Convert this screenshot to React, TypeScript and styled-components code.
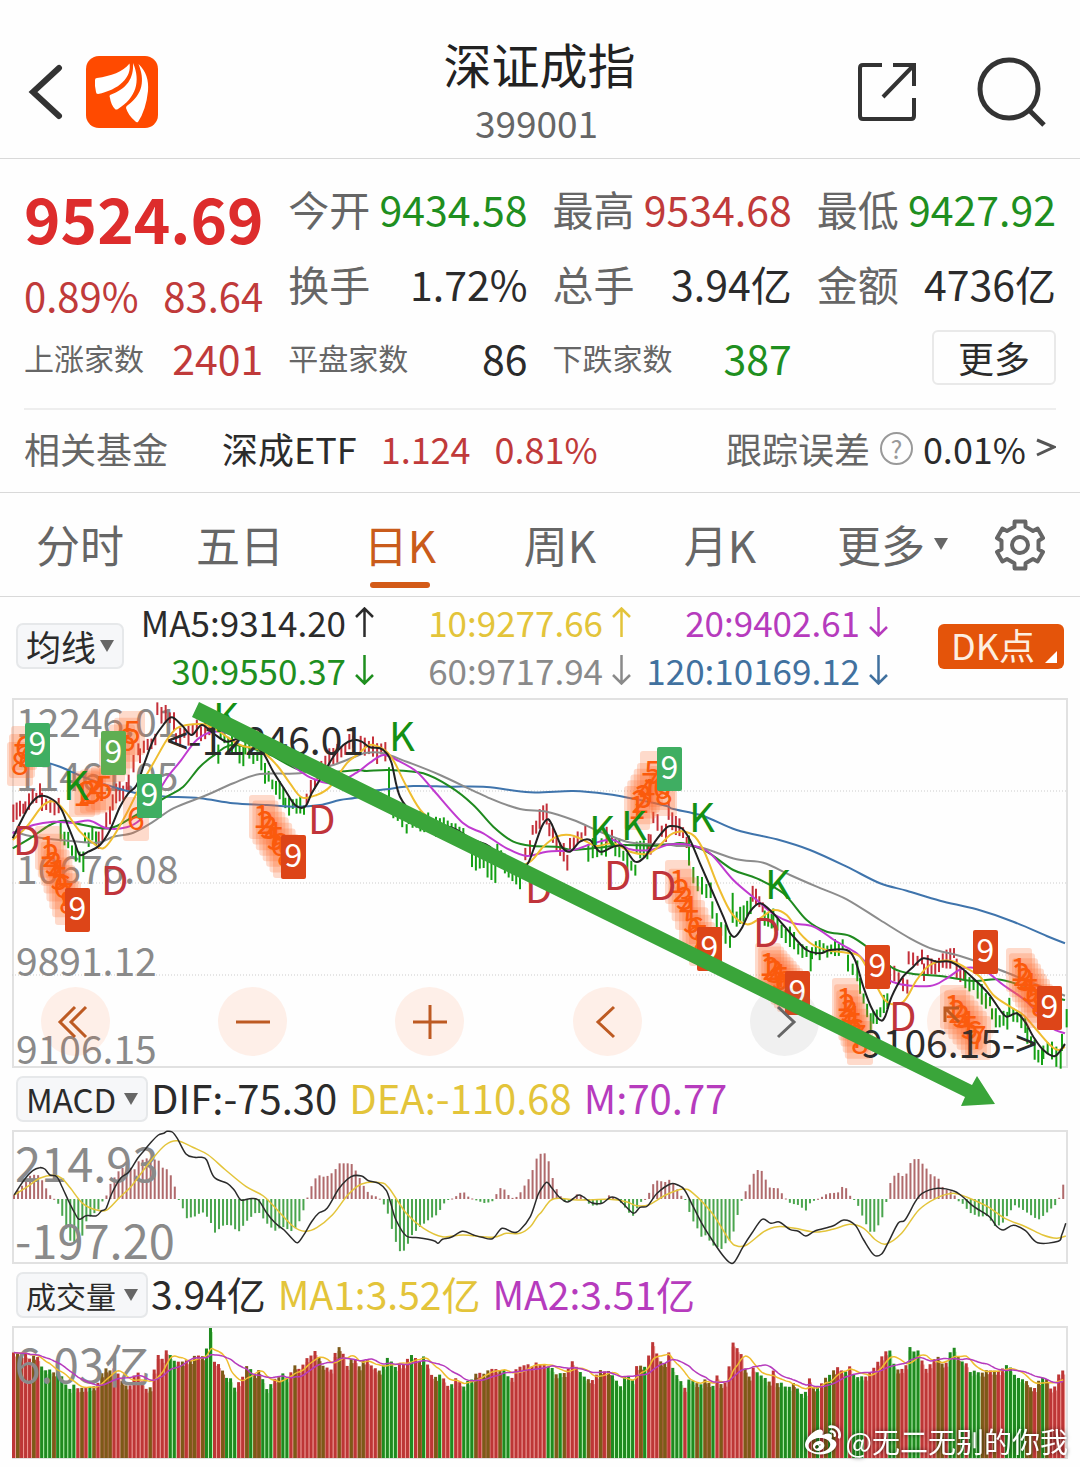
import React from "react";
import styled, { createGlobalStyle } from "styled-components";
import { FaWeibo } from "react-icons/fa";

const C = {
  red: "#c03a3a",
  green: "#1f8f1f",
  ink: "#2b2b2b",
  label: "#666666",
  axis: "#8a8a8a",
  yellow: "#e3c43a",
  magenta: "#b63bbd",
  blue: "#41719f",
  line: "#d9d9d9",
};

const GlobalStyle = createGlobalStyle`
  * { box-sizing: border-box; }
  body {
    margin: 0;
    background: #fefefe;
    color: ${C.ink};
    font-family: "Noto Sans CJK SC", "Noto Sans", sans-serif;
  }
  button, select {
    font: inherit;
    color: inherit;
    background: none;
    border: 0;
    padding: 0;
    margin: 0;
    cursor: pointer;
  }
  svg { display: block; }
`;

/* ---------- series helpers ---------- */

type Pt = [number, number];
const parse = (s: string): Pt[] =>
  s.trim().split(/\s+/).map((p) => p.split(",").map(Number) as Pt);

/* price series are sampled in blocks at 3 units per pixel */
const price = (ox: number, s: string): Pt[] =>
  parse(s).map(([x, y]) => [ox + x / 3, 690 + y / 3]);
/* indicator series are sampled in two halves */
const half = (ox: number, s: string): Pt[] =>
  parse(s).map(([x, y]) => [ox + x / 2.904, 1070 + y / 3]);

const smooth = (pts: Pt[]) => {
  let d = `M${pts[0][0].toFixed(1)} ${pts[0][1].toFixed(1)}`;
  for (let i = 0; i < pts.length - 1; i++) {
    const a = pts[Math.max(i - 1, 0)];
    const b = pts[i];
    const c = pts[i + 1];
    const e = pts[Math.min(i + 2, pts.length - 1)];
    d += `C${(b[0] + (c[0] - a[0]) / 6).toFixed(1)} ${(b[1] + (c[1] - a[1]) / 6).toFixed(1)} ${(c[0] - (e[0] - b[0]) / 6).toFixed(1)} ${(c[1] - (e[1] - b[1]) / 6).toFixed(1)} ${c[0].toFixed(1)} ${c[1].toFixed(1)}`;
  }
  return d;
};

const sample = (pts: Pt[], x: number) => {
  if (x <= pts[0][0]) return pts[0][1];
  for (let i = 1; i < pts.length; i++) {
    if (x <= pts[i][0]) {
      const [x0, y0] = pts[i - 1];
      const [x1, y1] = pts[i];
      return y0 + ((y1 - y0) * (x - x0)) / (x1 - x0 || 1);
    }
  }
  return pts[pts.length - 1][1];
};

const noise = (i: number) => {
  const v = Math.sin(i * 127.1 + 11.7) * 43758.5453;
  return v - Math.floor(v);
};

/* ---------- price chart data ---------- */

const averages: { color: string; d: string }[] = [
  {
    color: "#3f74ac",
    d: smooth([
      ...price(0, "130,215 180,230 260,265 370,300 440,315 500,320 600,325 700,340 800,345 890,350 960,345 1020,330 1075,322"),
      ...price(340, "90,305 140,298 220,288 330,290 440,291 570,307 700,303 800,312 900,330 980,348"),
      ...price(640, "100,357 190,378 290,420 410,448 510,480 620,530 720,580 800,602 900,632 1010,658 1120,695 1220,738 1275,760"),
    ]),
  },
  {
    color: "#8c8c8c",
    d: smooth([
      ...price(0, "38,425 100,440 180,450 290,458 340,440 400,428 460,395 520,355 620,315 700,280 780,252 900,250 1000,225 1070,198"),
      ...price(340, "80,188 130,190 200,215 300,255 450,325 540,357 620,365 700,390 780,425 860,455 920,462 980,463"),
      ...price(640, "110,468 180,472 290,508 370,518 450,555 530,590 620,628 720,690 810,745 880,778 960,798 1080,840 1180,880 1275,917"),
    ]),
  },
  {
    color: "#1f8a1f",
    d: smooth([
      ...price(0, "38,475 90,445 150,405 190,392 250,405 330,415 400,380 440,355 500,320 550,290 600,230 650,190 700,165 800,190 900,240 1000,245 1075,240"),
      ...price(340, "80,243 150,240 250,250 330,290 400,345 460,410 520,455 580,468 650,470 700,480 800,470 850,465 950,467 1000,462"),
      ...price(640, "130,460 200,485 280,540 350,565 430,610 500,690 560,725 630,738 700,785 760,835 820,852 900,858 1000,873 1070,868 1140,885 1200,910 1275,930"),
    ]),
  },
  {
    color: "#c03ad0",
    d: smooth([
      ...price(0, "38,430 100,405 160,395 220,398 270,392 320,415 380,412 420,390 450,350 500,265 540,215 590,150 640,125 700,135 780,175 860,215 930,262 1000,280 1070,248"),
      ...price(340, "90,218 130,195 170,210 230,245 280,300 370,400 430,430 500,475 560,498 620,485 700,480 760,460 820,450 870,478 930,480 980,465"),
      ...price(640, "110,462 150,465 210,490 280,570 350,630 400,672 460,700 520,710 590,755 650,790 700,840 770,880 870,888 920,865 970,835 1030,840 1090,885 1160,935 1230,1010 1275,1030"),
    ]),
  },
  {
    color: "#efbd2f",
    d: smooth([
      ...price(0, "38,450 80,410 130,345 165,335 200,370 240,425 280,460 310,475 340,440 380,370 420,290 460,220 500,150 530,115 560,105 610,103 650,120 720,165 780,180 830,225 870,280 905,322 950,315 990,290 1040,220 1075,192"),
      ...price(340, "80,170 100,165 140,185 165,220 200,290 250,370 330,420 420,465 520,525 570,515 610,470 650,440 690,435 730,450 770,468 820,460 870,485 920,492 950,475 990,435"),
      ...price(640, "115,425 135,425 165,440 195,490 235,590 275,670 320,703 360,685 400,660 440,675 480,730 520,765 570,782 620,788 660,800 700,870 740,935 790,935 830,870 870,825 930,812 980,835 1020,860 1060,915 1110,950 1150,975 1190,1020 1230,1065 1255,1080 1275,1070"),
    ]),
  },
  {
    color: "#222222",
    d: smooth([
      ...price(0, "38,445 60,400 90,345 120,318 160,330 185,360 205,410 225,460 240,495 265,485 300,465 330,420 360,350 385,310 410,285 435,215 460,150 490,105 515,82 545,105 575,135 605,105 640,130 680,155 720,145 760,165 790,190 820,245 855,300 885,345 915,350 935,310 965,260 1000,200 1030,165 1060,150"),
      ...price(340, "65,155 90,172 120,175 140,190 155,220 180,320 230,380 280,400 340,415 400,450 450,470 520,545 560,525 580,480 605,410 625,388 645,425 665,470 690,485 720,455 750,450 780,485 820,470 850,470 885,515 915,500 945,455 975,418"),
      ...price(640, "90,408 125,415 150,450 180,520 215,600 250,680 270,730 285,740 305,715 330,665 360,640 395,665 430,705 465,745 500,780 540,790 570,780 620,780 645,810 670,890 695,955 720,990 735,980 755,920 785,865 820,830 850,805 890,815 930,815 965,835 1000,865 1045,910 1080,960 1100,980 1130,970 1155,995 1180,1040 1210,1080 1245,1098 1275,1062"),
    ]),
  },
];

/* [origin, rising?, x from, x to, y from, y to] */
type Run = [number, 0 | 1, number, number, number, number];
const runs: Run[] = [
  [0, 1, 40, 70, 365, 365], [0, 1, 76, 120, 345, 310], [0, 1, 126, 176, 345, 355],
  [0, 0, 182, 250, 430, 515], [0, 0, 255, 288, 440, 440], [0, 1, 296, 330, 460, 370],
  [0, 1, 338, 380, 330, 290], [0, 1, 386, 415, 280, 170], [0, 1, 420, 466, 190, 140],
  [0, 1, 472, 522, 55, 105], [0, 1, 528, 628, 140, 115], [0, 0, 640, 655, 180, 190],
  [0, 0, 662, 730, 140, 200], [0, 0, 736, 784, 175, 215], [0, 0, 795, 850, 255, 320],
  [0, 0, 856, 912, 340, 355], [0, 1, 920, 945, 320, 290], [0, 1, 952, 1060, 250, 145],
  [340, 1, 62, 136, 175, 185], [340, 0, 147, 148, 270, 270], [340, 0, 160, 200, 360, 410],
  [340, 0, 206, 370, 385, 430], [340, 0, 396, 466, 500, 545], [340, 0, 472, 540, 480, 575],
  [340, 1, 556, 570, 500, 475], [340, 1, 578, 620, 420, 365], [340, 1, 628, 682, 410, 510],
  [340, 1, 690, 736, 470, 430], [340, 0, 745, 798, 485, 470], [340, 1, 800, 816, 440, 450],
  [340, 0, 826, 886, 470, 540], [340, 0, 890, 922, 475, 475], [340, 1, 926, 932, 465, 460],
  [340, 1, 940, 978, 385, 430], [340, 1, 986, 1040, 370, 450],
  [640, 0, 147, 148, 490, 490], [640, 0, 160, 212, 560, 610], [640, 0, 217, 270, 670, 750],
  [640, 0, 278, 279, 650, 650], [640, 0, 290, 332, 690, 640], [640, 1, 338, 368, 610, 650],
  [640, 0, 374, 395, 680, 700], [640, 0, 400, 512, 690, 805], [640, 0, 516, 608, 785, 770],
  [640, 0, 624, 652, 810, 850], [640, 0, 660, 692, 890, 1000], [640, 0, 700, 742, 990, 930],
  [640, 1, 750, 802, 850, 890], [640, 1, 806, 846, 800, 810], [640, 1, 852, 942, 840, 795],
  [640, 1, 950, 972, 840, 850], [640, 0, 976, 1050, 860, 935], [640, 0, 1056, 1102, 975, 995],
  [640, 0, 1108, 1156, 955, 1000], [640, 0, 1162, 1206, 1040, 1105], [640, 0, 1210, 1262, 1080, 1100],
  [640, 0, 1266, 1280, 1050, 990],
];

const candles = runs.flatMap(([ox, up, x0, x1, y0, y1], r) => {
  const n = Math.max(1, Math.round((x1 - x0) / 12) + 1);
  return Array.from({ length: n }, (_, i) => {
    const t = n > 1 ? i / (n - 1) : 0;
    const seed = r * 17 + i;
    const h = n === 1 ? 30 : 9 + noise(seed) * 12;
    const cy = 690 + (y0 + (y1 - y0) * t) / 3 + (noise(seed + 500) - 0.5) * 7;
    return { x: ox + (x0 + (x1 - x0) * t) / 3, y: cy - h / 2, h, up: up === 1 };
  });
});

/* nine-turn counts that lead up to a badge: [digits, x from, y from, x to, y to] */
type Count = [string, number, number, number, number];
const counts: Count[] = [
  ["678", 24, 748, 20, 764],
  ["56784", 132, 733, 112, 760],
  ["12345", 82, 795, 104, 788],
  ["6", 136, 819, 136, 819],
  ["12345678", 48, 848, 68, 903],
  ["12345678", 262, 817, 286, 856],
  ["12347", 637, 808, 650, 785],
  ["5", 653, 773, 653, 773],
  ["68", 662, 788, 664, 794],
  ["1234", 678, 882, 688, 908],
  ["5678", 692, 922, 702, 944],
  ["12345678", 768, 965, 790, 990],
  ["12345678", 845, 1000, 860, 1043],
  ["1234567", 953, 1007, 978, 1038],
  ["12345678", 1019, 970, 1040, 1006],
];
const marks = counts.flatMap(([digits, x0, y0, x1, y1]) =>
  digits.split("").map((digit, i) => {
    const t = digits.length > 1 ? i / (digits.length - 1) : 0;
    return { digit, x: x0 + (x1 - x0) * t, y: y0 + (y1 - y0) * t };
  })
);

const badges: { x: number; y: number; fill: string }[] = [
  { x: 25, y: 723, fill: "#3fae62" },
  { x: 101, y: 731, fill: "#5fae52" },
  { x: 137, y: 774, fill: "#3fae62" },
  { x: 65, y: 888, fill: "#dd4518" },
  { x: 281, y: 835, fill: "#dd4518" },
  { x: 657, y: 747, fill: "#3fae62" },
  { x: 697, y: 927, fill: "#dd4518" },
  { x: 785, y: 971, fill: "#dd4518" },
  { x: 865, y: 945, fill: "#dd4518" },
  { x: 973, y: 930, fill: "#dd4518" },
  { x: 1037, y: 986, fill: "#dd4518" },
];

const signals: [string, number, number][] = [
  ["K", 63, 800], ["K", 213, 732], ["K", 389, 751], ["K", 589, 845], ["K", 621, 840],
  ["K", 689, 832], ["K", 765, 899], ["D", 13, 855], ["D", 101, 895], ["D", 308, 834],
  ["D", 525, 903], ["D", 604, 890], ["D", 649, 900], ["D", 753, 947], ["D", 889, 1031],
];

/* ---------- indicator data ---------- */

const STEP = 4.02;
const COUNT = 262;
const ZERO = 1199;

const histogram = [
  ...half(0, "41,375 62,350 85,318 108,312 122,330 134,355 145,375 157,386 168,398 180,435 192,475 205,515 228,520 240,495 250,455 262,440 285,420 297,395 308,380 320,343 343,305 366,285 390,300 400,275 425,265 460,270 470,292 490,300 505,340 517,385 530,412 541,445 565,440 587,425 610,450 622,490 650,465 670,465 692,487 715,455 740,430 750,425 775,460 798,483 820,470 850,485 865,465 877,435 888,398 900,360 912,330 925,315 945,322 970,305 985,280 1020,280 1035,305 1060,355 1075,375 1100,381 1110,398 1122,412 1133,460 1145,500 1157,540 1167,548 1180,535 1192,500 1215,475 1250,445 1272,433 1285,405 1300,390 1315,385 1330,375 1343,362 1360,380 1385,392 1410,400 1435,392 1445,362 1458,350 1470,365 1483,385 1503,380 1516,360 1528,338 1540,320 1550,290 1562,255"),
  ...half(540, "5,250 18,250 30,290 41,345 53,365 65,388 77,400 90,390 110,370 120,378 133,390 145,405 160,408 180,400 200,376 215,382 230,392 245,410 260,430 274,440 285,405 297,392 310,384 320,362 332,335 345,330 360,338 378,328 390,345 400,360 412,380 423,390 435,430 447,458 460,480 470,503 482,495 500,525 527,537 540,518 552,510 564,480 576,425 588,384 598,362 610,342 621,310 632,300 645,303 656,330 668,354 690,354 704,372 715,387 727,400 750,405 772,422 785,398 800,390 820,380 835,370 865,368 878,350 890,355 901,378 912,388 923,405 935,435 947,462 960,487 972,485 983,465 995,440 1006,395 1016,342 1028,318 1040,308 1055,320 1065,310 1075,280 1088,267 1100,267 1110,280 1122,295 1133,312 1157,325 1168,350 1180,358 1200,368 1212,392 1225,398 1248,428 1275,440 1300,438 1320,468 1340,465 1355,440 1378,405 1400,418 1425,435 1447,450 1470,430 1490,410 1503,400 1515,358 1527,320"),
];

const dif = smooth([
  ...half(0, "41,375 70,330 95,302 115,293 130,297 145,315 165,320 180,350 200,395 215,425 230,448 250,437 280,437 295,422 308,415 325,370 350,325 375,305 400,265 420,240 440,215 460,195 475,190 485,184 500,186 515,205 540,252 565,262 585,262 600,270 622,322 660,340 680,360 700,390 725,386 750,390 775,430 800,460 825,480 850,508 865,518 885,490 905,455 925,430 950,415 985,355 1020,320 1050,318 1070,332 1100,340 1122,362 1135,400 1150,450 1180,498 1215,503 1260,512 1272,520 1285,508 1310,502 1343,484 1375,495 1400,502 1430,506 1458,475 1490,487 1510,480 1540,440 1562,375"),
  ...half(540, "5,355 20,337 35,355 55,380 80,396 110,376 125,380 150,398 180,400 205,382 225,386 245,405 272,430 290,412 312,408 340,370 378,342 400,345 420,360 445,410 470,460 500,510 530,555 550,577 565,575 590,530 615,490 645,448 670,460 695,456 725,478 750,484 772,498 800,482 850,468 882,450 915,465 940,510 970,555 992,552 1010,520 1040,460 1060,450 1090,395 1110,370 1155,355 1200,362 1225,378 1260,410 1305,440 1325,468 1345,480 1375,466 1410,482 1445,518 1505,514 1515,495 1527,460"),
]);

const dea = smooth([
  ...half(0, "41,375 80,350 115,325 155,316 180,325 205,355 240,400 280,420 310,420 345,385 380,350 410,310 440,270 480,225 515,212 560,232 605,255 655,300 715,350 765,378 810,425 850,468 885,484 920,473 965,435 1010,375 1050,342 1105,338 1130,355 1180,430 1230,475 1285,500 1345,495 1430,502 1470,490 1510,490 1540,470 1560,440"),
  ...half(540, "5,425 30,392 55,385 110,390 200,388 250,395 280,407 315,405 365,375 415,357 445,370 500,430 550,510 572,528 600,525 650,485 690,470 740,475 800,486 850,478 900,463 940,475 975,510 1005,522 1050,490 1100,420 1150,385 1200,370 1240,382 1300,410 1350,445 1410,470 1460,495 1500,505 1527,498"),
]);

const volumeTops = [
  ...half(0, "41,845 62,850 85,860 110,860 122,885 140,900 175,905 200,955 215,940 230,960 255,950 280,955 300,900 325,895 343,905 360,945 380,940 400,905 425,955 445,945 455,845 470,875 482,838 492,850 505,875 525,875 550,875 572,858 597,865 608,772 618,870 640,880 655,925 667,918 680,955 700,935 712,895 725,885 740,915 760,900 770,960 782,955 800,930 820,910 832,935 850,900 862,880 873,905 885,875 910,850 922,842 932,875 960,905 977,840 990,835 1010,885 1028,855 1045,890 1063,860 1085,890 1105,900 1130,855 1145,885 1170,885 1200,855 1215,880 1236,852 1250,905 1270,925 1285,915 1304,955 1320,925 1350,945 1375,920 1400,910 1435,890 1455,905 1470,895 1480,940 1500,900 1530,885 1562,882"),
  ...half(540, "5,885 30,885 50,920 65,905 75,915 97,875 115,910 135,920 155,935 180,895 200,905 225,930 237,950 250,915 270,930 284,878 300,900 318,855 330,815 342,855 360,890 377,845 387,895 410,930 423,950 435,925 455,945 490,930 503,955 516,912 528,945 545,925 562,818 575,830 587,855 600,905 610,925 622,890 640,915 665,935 680,905 692,940 720,945 740,945 760,970 775,970 783,922 800,955 820,935 845,915 862,895 885,905 898,890 912,910 945,925 965,900 980,875 1000,852 1016,842 1030,880 1045,900 1062,895 1073,828 1085,855 1097,830 1110,870 1120,905 1135,880 1155,850 1175,890 1190,860 1201,820 1213,860 1235,875 1250,900 1280,915 1300,895 1335,910 1352,880 1367,888 1378,920 1410,930 1435,955 1455,930 1468,908 1478,960 1500,945 1515,895 1527,905"),
];
const volumeKinds =
  "RBRRRBRGGGBGGGGGRBRGBRBBBRRBBRRRRRBRRRRGGRBRBBRBGGRRBGGGRRBGBBGGGRBGGRBRRRRRBBRRRBRRBRBBRRRBGGGGRRRGRBGRRBGRRGRRGGGBRBBRRBGGRRRRRRR" +
  "RRGGBGBRRRGGBRRBRBGGGGGGRBGRRRBBRGGGRGGBGBBGRBRRRRRBBRGGGBRBGGGBGGGRBGRBGBRRGRGGGRRRRRRGGBRRGGGRRRRBBRGGBGRGGGBBRBRRGGGGGBBRBGBRRRR";
const volumeFill: Record<string, string> = { R: "#bd3636", B: "#7c5a18", G: "#1f8a1f" };
const volumeEdge: Record<string, string> = { R: "#ee9a94", B: "#a8603a", G: "#b9f3b2" };

const volumes = Array.from({ length: COUNT }, (_, i) => {
  const x = 14 + i * STEP;
  const spike = Math.abs(x - 209.4) < STEP / 2;
  return {
    x,
    y: spike ? 1328 : Math.max(1340, sample(volumeTops, x) + (noise(i) - 0.5) * 4),
    kind: spike ? "G" : volumeKinds[i] ?? "R",
  };
});
const movingAverage = (n: number): Pt[] =>
  volumes.map((v, i) => {
    const from = Math.max(0, i - n + 1);
    const part = volumes.slice(from, i + 1);
    return [v.x, part.reduce((s, p) => s + p.y, 0) / part.length];
  });

/* ---------- layout ---------- */

const Page = styled.main`
  width: 100%;
  overflow: hidden;
`;

const Header = styled.header`
  display: grid;
  grid-template-columns: 1fr auto 1fr;
  align-items: center;
  padding: 36px 33px 10px 28px;
  border-bottom: 1px solid ${C.line};
`;
const HeaderSide = styled.div<{ $end?: boolean }>`
  display: flex;
  align-items: center;
  justify-content: ${(p) => (p.$end ? "flex-end" : "flex-start")};
  gap: ${(p) => (p.$end ? 60 : 22)}px;
`;
const Heading = styled.div`
  padding-left: 4px;
  text-align: center;
`;
const Title = styled.h1`
  margin: 0 0 6px;
  font-size: 48px;
  line-height: 54px;
  font-weight: 400;
  color: #222;
`;
const Code = styled.p`
  margin: 0;
  padding-right: 6px;
  font-size: 37px;
  line-height: 52px;
  color: ${C.label};
`;

const Quote = styled.section`
  margin: 0 24px;
  padding: 12px 0 14px;
  display: grid;
  grid-template-columns: repeat(4, minmax(0, 1fr));
  grid-template-rows: 74px 75px 74px;
  column-gap: 25px;
  border-bottom: 2px solid #eeeeee;
`;
const Headline = styled.div`
  grid-row: span 2;
`;
const Price = styled.div`
  margin-bottom: 6px;
  font-size: 62px;
  line-height: 92px;
  font-weight: 700;
  color: #dd2c2c;
`;
const Change = styled.div`
  display: flex;
  justify-content: space-between;
  font-size: 40px;
  line-height: 52px;
  color: ${C.red};
`;
const Stat = styled.div`
  display: flex;
  align-items: center;
  justify-content: space-between;
  white-space: nowrap;
`;
const StatLabel = styled.span<{ $small?: boolean }>`
  font-size: ${(p) => (p.$small ? 30 : 41)}px;
  color: ${C.label};
`;
const StatValue = styled.span<{ $color?: string }>`
  font-size: 41px;
  color: ${(p) => p.$color ?? C.ink};
`;
const MoreCell = styled.div`
  display: flex;
  align-items: center;
  justify-content: flex-end;
`;
const MoreButton = styled.button`
  width: 124px;
  height: 55px;
  border: 2px solid #e9e9e9;
  border-radius: 6px;
  font-size: 36px;
  line-height: 46px;
`;

const Fund = styled.section`
  display: flex;
  align-items: center;
  padding: 0 24px 6px;
  height: 83px;
  font-size: 36px;
  white-space: nowrap;
  border-bottom: 1px solid ${C.line};
`;
const FundLabel = styled.span`
  color: ${C.label};
`;
const FundLink = styled.a`
  display: flex;
  gap: 24px;
  margin-left: 54px;
  color: ${C.ink};
  text-decoration: none;
`;
const Rise = styled.span`
  color: ${C.red};
`;
const Tracking = styled.div`
  margin-left: auto;
  display: flex;
  align-items: center;
  gap: 10px;
`;
const Help = styled.button`
  width: 33px;
  height: 33px;
  border: 2px solid #999;
  border-radius: 50%;
  color: #999;
  font-size: 25px;
  line-height: 28px;
`;

const Tabs = styled.nav`
  display: grid;
  grid-template-columns: repeat(6, 160fr) 120fr;
  height: 104px;
  border-bottom: 1px solid ${C.line};
`;
const Tab = styled.button<{ $active?: boolean }>`
  display: flex;
  flex-direction: column;
  align-items: center;
  justify-content: flex-end;
  gap: 6px;
  padding-bottom: 8px;
  font-size: 44px;
  line-height: 64px;
  color: ${(p) => (p.$active ? "#c95b1b" : C.label)};
  &::after {
    content: "";
    width: 60px;
    height: 6px;
    border-radius: 3px;
    background: ${(p) => (p.$active ? "#d35a17" : "transparent")};
  }
`;
const TabText = styled.span`
  display: flex;
  align-items: center;
  gap: 8px;
`;
const MoreTab = styled(Tab)`
  padding-left: 26px;
`;
const GearButton = styled.button`
  display: flex;
  align-items: center;
  justify-content: center;
`;

const Averages = styled.section`
  display: flex;
  align-items: center;
  padding: 1px 16px 4px;
`;
const AverageGrid = styled.div`
  flex: 1;
  display: grid;
  grid-template-columns: 250fr 257fr 257fr;
  padding-right: 50px;
  font-size: 35px;
  line-height: 48px;
  white-space: nowrap;
`;
const Average = styled.span<{ $color: string }>`
  display: flex;
  align-items: center;
  justify-content: flex-end;
  gap: 9px;
  color: ${(p) => p.$color};
`;
const DkButton = styled.button`
  display: flex;
  align-items: flex-end;
  gap: 10px;
  width: 126px;
  height: 45px;
  padding: 0 6px 6px 13px;
  border-radius: 6px;
  background: #e4540a;
  color: #fdeee0;
  font-size: 36px;
  line-height: 38px;
  white-space: nowrap;
`;

const Picker = styled.label<{ $width: number }>`
  position: relative;
  flex: none;
  display: block;
  width: ${(p) => p.$width}px;
  height: 46px;
`;
const PickerSelect = styled.select<{ $size: number }>`
  appearance: none;
  display: block;
  width: 100%;
  height: 100%;
  padding-left: 8px;
  border: 2px solid #e6e8ea;
  border-radius: 7px;
  background: #f6f7f9;
  font-size: ${(p) => p.$size}px;
  line-height: 40px;
`;
const PickerMark = styled.span`
  position: absolute;
  right: 9px;
  top: 16px;
  pointer-events: none;
`;

const ChartArea = styled.section`
  position: relative;
  margin: 0 12px;
`;
const Chart = styled.svg`
  width: 100%;
  height: auto;
  overflow: visible;
`;
const ArrowLayer = styled.svg`
  position: absolute;
  inset: 0;
  z-index: 2;
  width: 100%;
  height: 100%;
  overflow: visible;
  pointer-events: none;
`;
const Controls = styled.div`
  position: absolute;
  z-index: 1;
  left: 29px;
  right: 72px;
  bottom: 12px;
  display: flex;
  justify-content: space-between;
`;
const Control = styled.button<{ $muted?: boolean }>`
  width: 69px;
  height: 69px;
  display: flex;
  align-items: center;
  justify-content: center;
  border-radius: 50%;
  color: ${(p) => (p.$muted ? "#666" : "#bd5a22")};
  background: ${(p) => (p.$muted ? "rgba(120,120,120,0.1)" : "rgba(255,110,40,0.1)")};
`;

const Indicator = styled.div<{ $size: number }>`
  display: flex;
  align-items: center;
  height: 62px;
  padding-left: 16px;
  font-size: ${(p) => p.$size}px;
  white-space: nowrap;
`;
const Readings = styled.div`
  display: flex;
  gap: 12px;
  padding: 0 0 5px 3px;
`;
const Reading = styled.span<{ $color?: string }>`
  color: ${(p) => p.$color ?? C.ink};
`;
const Watermark = styled.div`
  position: absolute;
  right: 0;
  bottom: 0;
  display: flex;
  align-items: center;
  gap: 5px;
  font-size: 28px;
  line-height: 36px;
  color: #fff;
  white-space: nowrap;
  filter: drop-shadow(0 0 2px rgba(0, 0, 0, 0.6));
`;
const Bottom = styled.div`
  height: 8px;
`;

/* ---------- drawings ---------- */

const Triangle = () => (
  <svg width="16" height="14" viewBox="0 0 16 14" aria-hidden="true">
    <path d="M1 1h14L8 13z" fill="#666" />
  </svg>
);

const Trend = ({ down }: { down?: boolean }) => (
  <svg width="19" height="30" viewBox="0 0 19 30" fill="none" stroke="currentColor" strokeWidth="2.5" aria-hidden="true">
    <path d={down ? "M9.500 0v28M1 20l8.500 8.500 8.500-8.500" : "M9.500 30V2M1 10l8.500-8.500 8.500 8.500"} />
  </svg>
);

const gearPoints = Array.from({ length: 6 }, (_, k) => k * 60 - 90)
  .flatMap((a) => [
    [a - 17, 19], [a - 13, 24], [a + 13, 24], [a + 17, 19],
  ])
  .map(([a, r]) => {
    const t = (a * Math.PI) / 180;
    return `${(28 + r * Math.cos(t)).toFixed(1)},${(28 + r * Math.sin(t)).toFixed(1)}`;
  })
  .join(" ");

const Gear = () => (
  <svg width="56" height="56" viewBox="0 0 56 56" fill="none" stroke="#666" strokeWidth="4" aria-hidden="true">
    <polygon points={gearPoints} strokeLinejoin="round" />
    <circle cx="28" cy="28" r="8" />
  </svg>
);

const Logo = () => (
  <svg width="74" height="74" viewBox="0 0 74 74" aria-hidden="true">
    <rect x="1" y="1" width="72" height="72" rx="13" fill="#ff4a00" />
    <g fill="#fff">
      <path d="M10 25Q10 23 12 23C26 21 38 17 44.500 8.500C47 22 34 35 13 39Q11 39 11 37Q9.500 31 10 25z" />
      <path d="M48 8C49 23 42 34 25 40Q24 41 25 43Q26 50 30 54Q31 55 33 54C51 43 56 26 48 8z" />
      <path d="M53.500 9C61 16 64 25 63 36Q61 55 53 67Q51.500 68 50 66Q43 60 41 53Q41 51 43 50C58 39 60 25 53.500 9z" />
    </g>
  </svg>
);

const PriceChart = () => (
  <Chart viewBox="12 698 1056 370" role="img" aria-label="日K线图">
    <rect x="13" y="699" width="1054" height="368" fill="none" stroke="#e1e1e1" strokeWidth="2" />
    {[791, 883, 975].map((y) => (
      <line key={y} x1="12" x2="1068" y1={y} y2={y} stroke="#cccccc" strokeDasharray="1 2" />
    ))}
    <g fill={C.axis} fontSize="39">
      <text x="16" y="737">12246.01</text>
      <text x="16" y="791">11461.05</text>
      <text x="16" y="884">10676.08</text>
      <text x="16" y="976">9891.12</text>
      <text x="16" y="1064">9106.15</text>
    </g>
    {candles.map((c, i) => (
      <rect key={i} x={c.x - 1} y={c.y} width="2" height={c.h} fill={c.up ? "#c4303a" : "#15a015"} />
    ))}
    {averages.map((a) => (
      <path key={a.color} d={a.d} fill="none" stroke={a.color} strokeWidth="2" />
    ))}
    {marks.map((m, i) => (
      <rect key={i} x={m.x - 13} y={m.y - 22} width="26" height="44" rx="3" fill="#ff6a2a" opacity="0.24" />
    ))}
    <g fill="#fb5a0c" fontSize="32" textAnchor="middle">
      {marks.map((m, i) => (
        <text key={i} x={m.x} y={m.y + 11}>{m.digit}</text>
      ))}
    </g>
    <g fontSize="40">
      {signals.map(([s, x, y], i) => (
        <text key={i} x={x} y={y} fill={s === "K" ? "#149014" : "#c0343a"}>{s}</text>
      ))}
    </g>
    <g fill={C.ink} fontSize="39">
      <text x="364" y="755" textAnchor="end">{"<-12246.01"}</text>
      <text x="1037" y="1058" textAnchor="end">{"9106.15->"}</text>
    </g>
    {badges.map((b) => (
      <g key={`${b.x}-${b.y}`}>
        <rect x={b.x} y={b.y} width="25" height="44" rx="2" fill={b.fill} />
        <text x={b.x + 12.5} y={b.y + 32} fontSize="32" fill="#fff" textAnchor="middle">9</text>
      </g>
    ))}
  </Chart>
);

const MacdChart = () => (
  <Chart viewBox="12 1130 1056 134" role="img" aria-label="MACD">
    <rect x="13" y="1131" width="1054" height="132" fill="none" stroke="#e1e1e1" strokeWidth="2" />
    {Array.from({ length: COUNT }, (_, i) => {
      const x = 14 + i * STEP;
      const y = sample(histogram, x);
      const h = Math.max(1, Math.abs(ZERO - y));
      return <rect key={i} x={x - 1} y={Math.min(y, ZERO)} width="2" height={h} fill={y < ZERO ? "#b06a6c" : "#4aa54e"} />;
    })}
    <g fill={C.axis} fontSize="47">
      <text x="15" y="1182">214.93</text>
      <text x="15" y="1259">-197.20</text>
    </g>
    <path d={dea} fill="none" stroke={C.yellow} strokeWidth="1.5" />
    <path d={dif} fill="none" stroke="#2b2b2b" strokeWidth="1.5" />
  </Chart>
);

const VolumeChart = () => (
  <Chart viewBox="12 1326 1056 133" role="img" aria-label="成交量">
    <rect x="13" y="1327" width="1054" height="131" fill="none" stroke="#e1e1e1" strokeWidth="2" />
    {volumes.map((v, i) => (
      <g key={i}>
        <rect x={v.x - 2} y={v.y + 4} width={STEP} height={1454 - v.y} fill={volumeEdge[v.kind]} />
        <rect x={v.x - 2} y={v.y} width="3" height={1458 - v.y} fill={volumeFill[v.kind]} />
      </g>
    ))}
    <text x="15" y="1383" fill={C.axis} fontSize="46">6.03亿</text>
    <path d={smooth(movingAverage(5))} fill="none" stroke="#efbd2f" strokeWidth="1.5" />
    <path d={smooth(movingAverage(10))} fill="none" stroke="#b63bbd" strokeWidth="1.5" />
  </Chart>
);

const controls: { name: string; d: string; muted?: boolean }[] = [
  { name: "快退", d: "M19 5L4 20l15 15M30 5L15 20l15 15" },
  { name: "缩小", d: "M3 20h34" },
  { name: "放大", d: "M3 20h34M20 3v34" },
  { name: "向左", d: "M27 5L11 20l16 15" },
  { name: "向右", d: "M14 5l16 15-16 15", muted: true },
  { name: "全屏", d: "M4 20V6h14M4 6l14 14" },
];

const PickerBox = ({ name, width, size, options }: { name: string; width: number; size: number; options: string[] }) => (
  <Picker $width={width}>
    <PickerSelect aria-label={name} $size={size} defaultValue={options[0]}>
      {options.map((o) => (
        <option key={o}>{o}</option>
      ))}
    </PickerSelect>
    <PickerMark>
      <Triangle />
    </PickerMark>
  </Picker>
);

const StatItem = ({ label, value, color, small }: { label: string; value: string; color?: string; small?: boolean }) => (
  <Stat>
    <StatLabel $small={small}>{label}</StatLabel>
    <StatValue $color={color}>{value}</StatValue>
  </Stat>
);

export default function App() {
  return (
    <Page>
      <GlobalStyle />
      <Header>
        <HeaderSide>
          <button aria-label="返回">
            <svg width="35" height="56" viewBox="0 0 35 56" fill="none" stroke="#333" strokeWidth="6" strokeLinecap="round">
              <path d="M31 4L5 28l26 24" />
            </svg>
          </button>
          <Logo />
        </HeaderSide>
        <Heading>
          <Title>深证成指</Title>
          <Code>399001</Code>
        </Heading>
        <HeaderSide $end>
          <button aria-label="分享">
            <svg width="60" height="60" viewBox="0 0 60 60" fill="none" stroke="#333" strokeWidth="4">
              <path d="M25 3H6Q3 3 3 6v48q0 3 3 3h48q3 0 3-3V36M36 3h21v21M57 3L26 35" />
            </svg>
          </button>
          <button aria-label="搜索">
            <svg width="70" height="70" viewBox="0 0 70 70" fill="none" stroke="#333" strokeWidth="5">
              <circle cx="32" cy="32" r="29" />
              <path d="M52 53l15 15" />
            </svg>
          </button>
        </HeaderSide>
      </Header>

      <Quote>
        <Headline>
          <Price>9524.69</Price>
          <Change>
            <span>0.89%</span>
            <span>83.64</span>
          </Change>
        </Headline>
        <StatItem label="今开" value="9434.58" color={C.green} />
        <StatItem label="最高" value="9534.68" color={C.red} />
        <StatItem label="最低" value="9427.92" color={C.green} />
        <StatItem label="换手" value="1.72%" />
        <StatItem label="总手" value="3.94亿" />
        <StatItem label="金额" value="4736亿" />
        <StatItem label="上涨家数" value="2401" color={C.red} small />
        <StatItem label="平盘家数" value="86" small />
        <StatItem label="下跌家数" value="387" color={C.green} small />
        <MoreCell>
          <MoreButton>更多</MoreButton>
        </MoreCell>
      </Quote>

      <Fund>
        <FundLabel>相关基金</FundLabel>
        <FundLink href="#etf">
          <span>深成ETF</span>
          <Rise>1.124</Rise>
          <Rise>0.81%</Rise>
        </FundLink>
        <Tracking>
          <FundLabel>跟踪误差</FundLabel>
          <Help aria-label="说明">?</Help>
          <span>0.01%</span>
          <svg width="20" height="20" viewBox="0 0 20 20" fill="none" stroke="#555" strokeWidth="3" aria-hidden="true">
            <path d="M1 2l17 7L1 17" />
          </svg>
        </Tracking>
      </Fund>

      <Tabs>
        <Tab>分时</Tab>
        <Tab>五日</Tab>
        <Tab $active aria-current="page">日K</Tab>
        <Tab>周K</Tab>
        <Tab>月K</Tab>
        <MoreTab aria-haspopup="menu">
          <TabText>
            更多
            <Triangle />
          </TabText>
        </MoreTab>
        <GearButton aria-label="设置">
          <Gear />
        </GearButton>
      </Tabs>

      <Averages>
        <PickerBox name="主图指标" width={108} size={35} options={["均线"]} />
        <AverageGrid>
          <Average $color={C.ink}>MA5:9314.20<Trend /></Average>
          <Average $color={C.yellow}>10:9277.66<Trend /></Average>
          <Average $color={C.magenta}>20:9402.61<Trend down /></Average>
          <Average $color={C.green}>30:9550.37<Trend down /></Average>
          <Average $color={C.axis}>60:9717.94<Trend down /></Average>
          <Average $color={C.blue}>120:10169.12<Trend down /></Average>
        </AverageGrid>
        <DkButton>
          DK点
          <svg width="12" height="12" viewBox="0 0 12 12" aria-hidden="true">
            <path d="M12 0v12H0z" fill="#fff" />
          </svg>
        </DkButton>
      </Averages>

      <ChartArea>
        <PriceChart />
        <Controls>
          {controls.map((c) => (
            <Control key={c.name} aria-label={c.name} $muted={c.muted}>
              <svg width="40" height="40" viewBox="0 0 40 40" fill="none" stroke="currentColor" strokeWidth="3" aria-hidden="true">
                <path d={c.d} />
              </svg>
            </Control>
          ))}
        </Controls>
        <ArrowLayer viewBox="12 698 1056 370" aria-hidden="true">
          <polygon points="199,702 972,1085 977,1076 995,1104 961,1106 965,1097 192,717" fill="#3aa53a" />
        </ArrowLayer>
      </ChartArea>

      <Indicator $size={40}>
        <PickerBox name="副图指标" width={132} size={33} options={["MACD"]} />
        <Readings>
          <Reading>DIF:-75.30</Reading>
          <Reading $color={C.yellow}>DEA:-110.68</Reading>
          <Reading $color={C.magenta}>M:70.77</Reading>
        </Readings>
      </Indicator>
      <ChartArea>
        <MacdChart />
      </ChartArea>

      <Indicator $size={39}>
        <PickerBox name="成交指标" width={132} size={30} options={["成交量"]} />
        <Readings>
          <Reading>3.94亿</Reading>
          <Reading $color={C.yellow}>MA1:3.52亿</Reading>
          <Reading $color={C.magenta}>MA2:3.51亿</Reading>
        </Readings>
      </Indicator>
      <ChartArea>
        <VolumeChart />
        <Watermark>
          <FaWeibo size={36} aria-hidden="true" />
          @无二无别的你我
        </Watermark>
      </ChartArea>
      <Bottom />
    </Page>
  );
}
